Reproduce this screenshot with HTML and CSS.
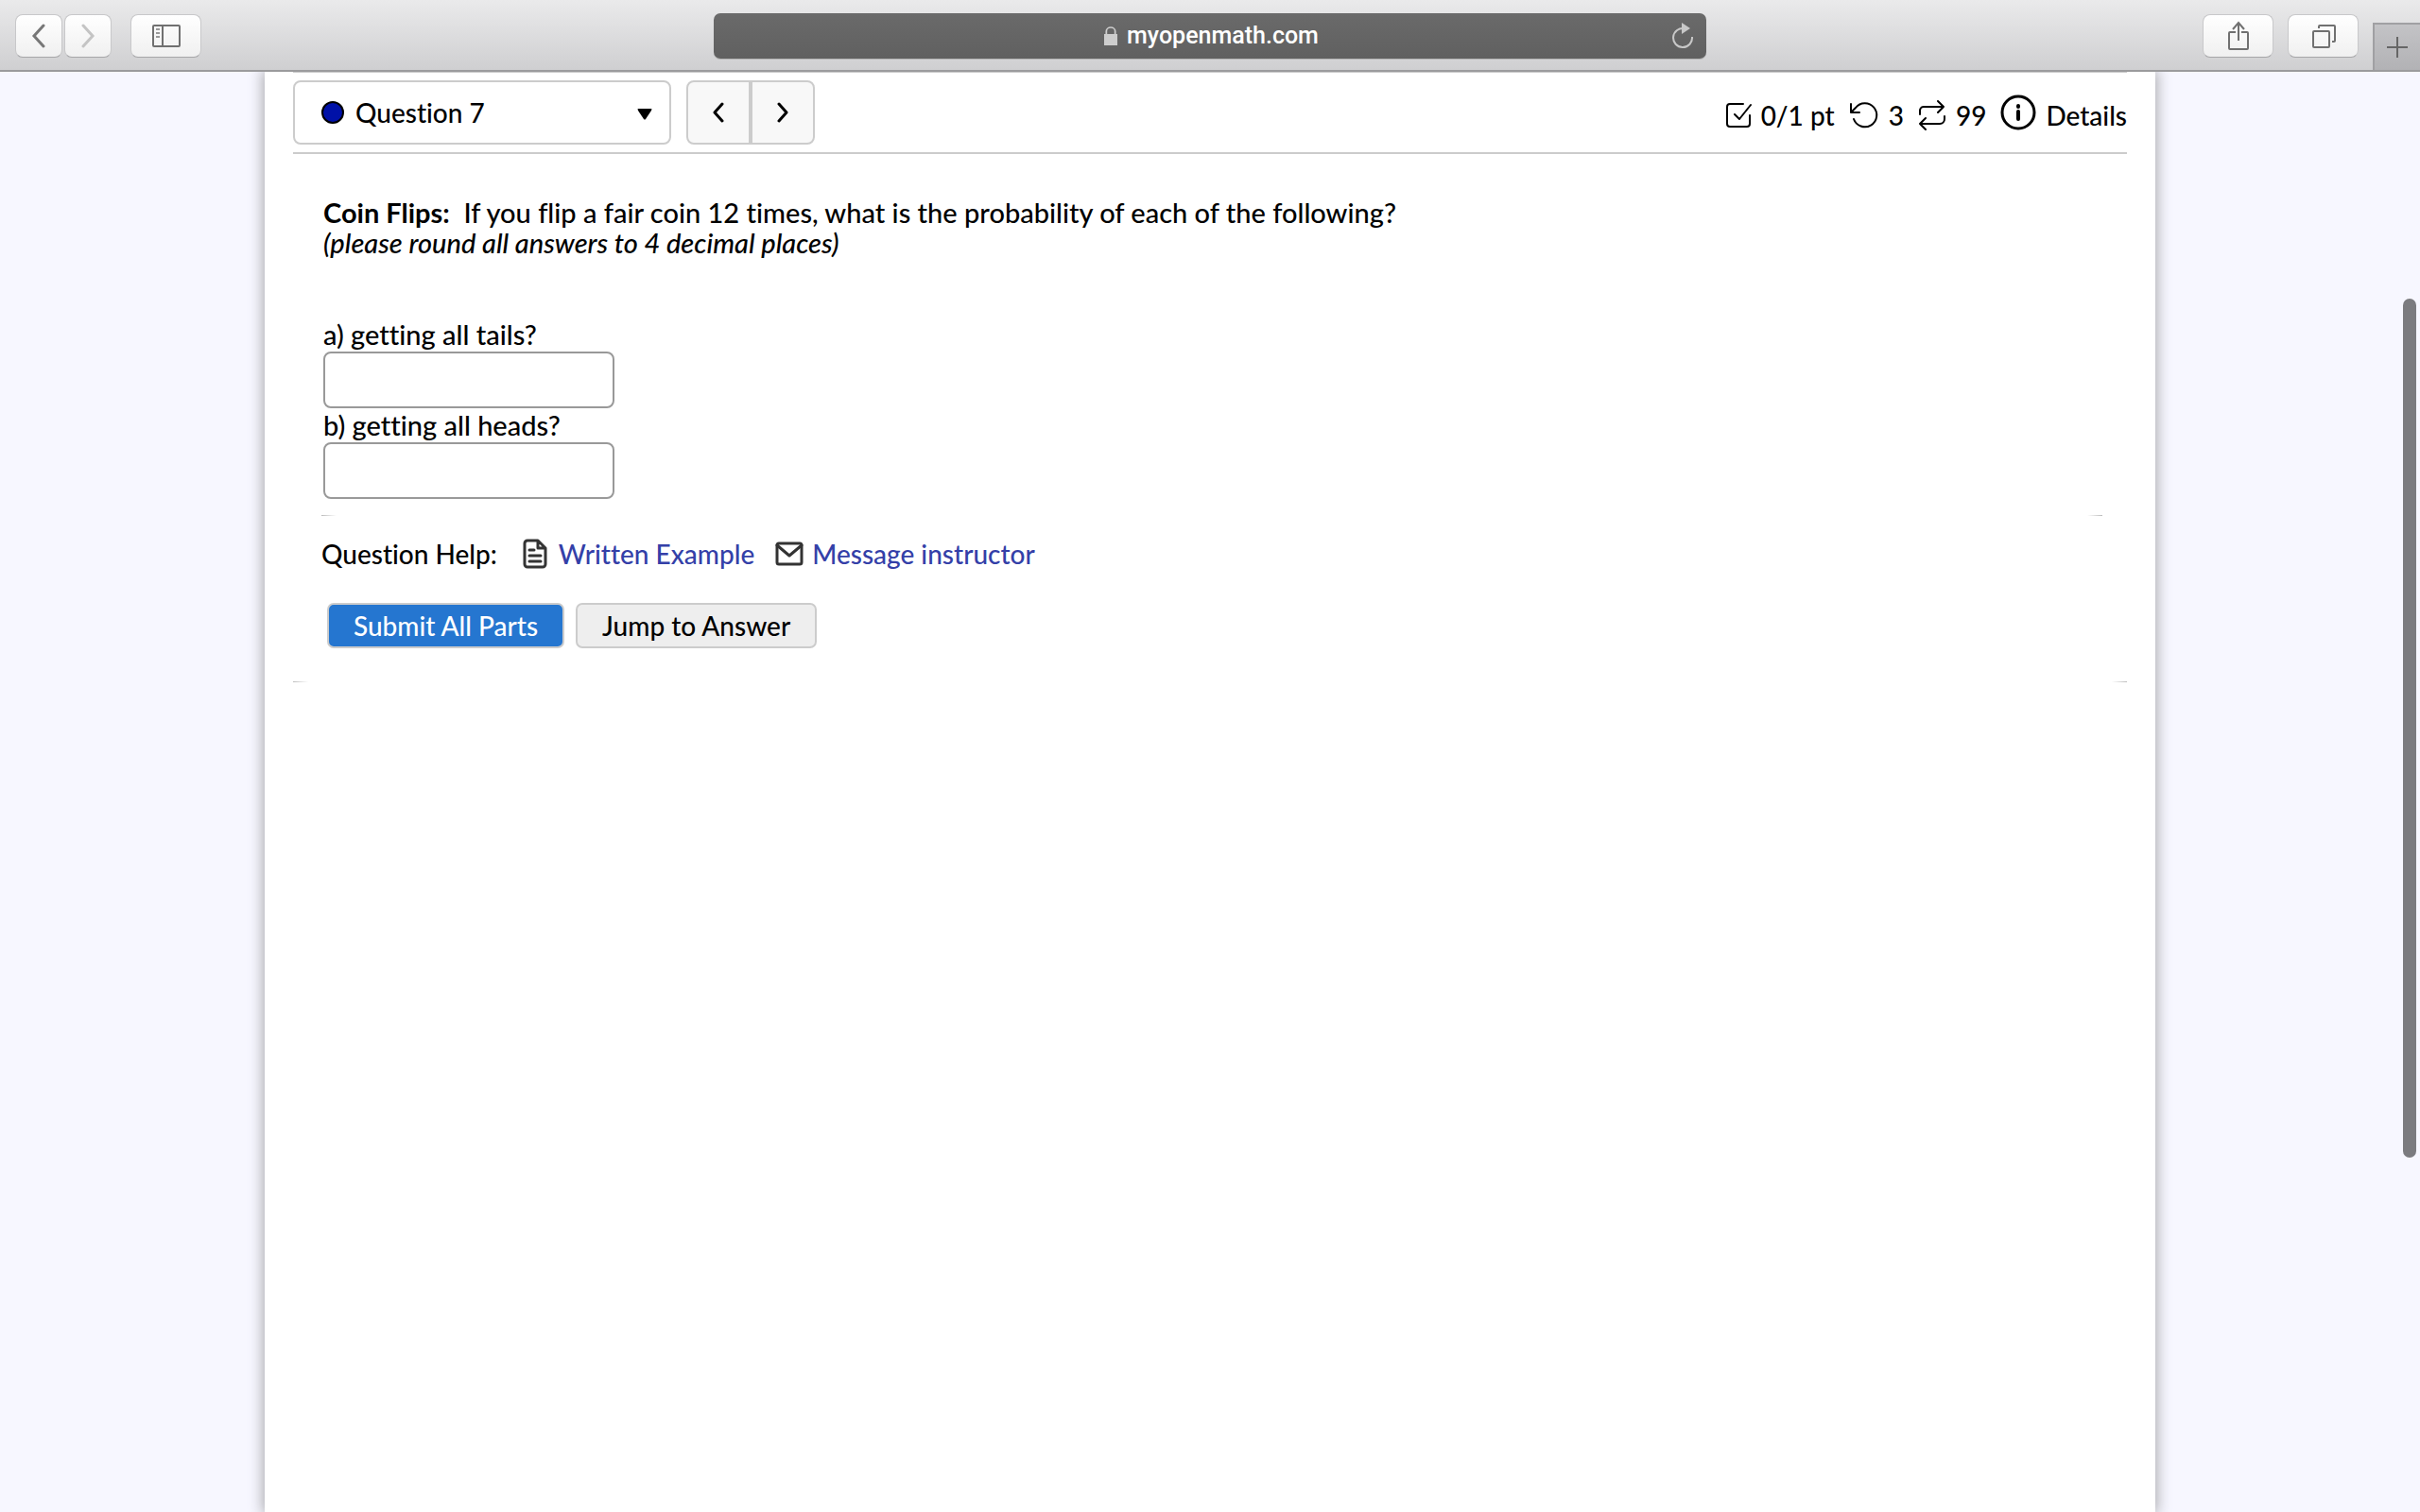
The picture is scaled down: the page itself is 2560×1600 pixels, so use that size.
FILE: index.html
```html
<!DOCTYPE html>
<html lang="en">
<head>
<meta charset="UTF-8">
<meta name="viewport" content="width=device-width, initial-scale=1.0">
<title>Question 7</title>
<link rel="stylesheet" href="styles.css">
</head>
<body>
  <header class="toolbar">
    <div class="toolbar-left">
      <div class="history">
        <button class="tool small" aria-label="Back">
          <svg width="16" height="26" viewBox="0 0 16 26" fill="none" stroke="#777" stroke-width="3" stroke-linecap="round"><path d="M13 2L3 13l10 11"/></svg>
        </button>
        <button class="tool small" aria-label="Forward">
          <svg width="16" height="26" viewBox="0 0 16 26" fill="none" stroke="#c4c4c4" stroke-width="3" stroke-linecap="round"><path d="M3 2l10 11L3 24"/></svg>
        </button>
      </div>
      <button class="tool" aria-label="Sidebar">
        <svg width="30" height="24" viewBox="0 0 30 24" fill="none" stroke="#707070" stroke-width="2"><rect x="1" y="1" width="28" height="22" rx="1"/><path d="M11 1v22"/><path d="M4 5h4M4 9h4M4 13h4" stroke="#999"/></svg>
      </button>
    </div>
    <div class="address">
      <a class="site" href="#">
        <svg width="14" height="20" viewBox="0 0 12 20" preserveAspectRatio="none"><path d="M0 8h12v12H0z" fill="#cdcdcd"/><path d="M2 9V5a4 4 0 0 1 8 0v4" fill="none" stroke="#cdcdcd" stroke-width="1.5"/></svg>
        <span>myopenmath.com</span>
      </a>
      <button class="reload" aria-label="Reload">
        <svg width="24" height="28" viewBox="0 0 24 28"><path d="M14 6.2A10 10 0 1 0 22 15" fill="none" stroke="#c8c8c8" stroke-width="2"/><path d="M11 0l9 6-9 6z" fill="#c8c8c8"/></svg>
      </button>
    </div>
    <div class="toolbar-right">
      <button class="tool" aria-label="Share">
        <svg width="24" height="32" viewBox="0 0 24 32" fill="none" stroke="#707070" stroke-width="2"><path d="M9 12H3a1 1 0 0 0-1 1v16a1 1 0 0 0 1 1h18a1 1 0 0 0 1-1V13a1 1 0 0 0-1-1h-6"/><path d="M12 21V3M6 9l6-7 6 7"/></svg>
      </button>
      <button class="tool" aria-label="Show tabs">
        <svg width="26" height="26" viewBox="0 0 26 26" fill="none" stroke="#707070" stroke-width="2"><rect x="2" y="8" width="17" height="17" rx="1"/><path d="M8 5V3a1 1 0 0 1 1-1h15a1 1 0 0 1 1 1v15a1 1 0 0 1-1 1h-2"/></svg>
      </button>
      <button class="new-tab" aria-label="New tab">
        <svg width="22" height="22" viewBox="0 0 22 22" stroke="#666" stroke-width="2"><path d="M11 0v22M0 11h22"/></svg>
      </button>
    </div>
  </header>

  <main class="page">
    <div class="question-bar">
      <div class="picker">
        <span class="dot"></span>
        <select aria-label="Question">
          <option>Question 7</option>
        </select>
        <svg width="16" height="16" viewBox="0 0 16 16"><path d="M1 4h14q1 0 0 2l-6 9q-1 1-2 0L1 6Q0 4 1 4z"/></svg>
      </div>
      <div class="pager">
        <button aria-label="Previous question"><svg width="12" height="22" viewBox="0 0 12 22"><path d="M10 2L2 11l8 9"/></svg></button>
        <button aria-label="Next question"><svg width="12" height="22" viewBox="0 0 12 22"><path d="M2 2l8 9-8 9"/></svg></button>
      </div>
      <div class="status">
        <span class="stat">
          <svg width="28" height="28" viewBox="0 0 28 28"><path d="M19 2H5a3 3 0 0 0-3 3v18a3 3 0 0 0 3 3h18a3 3 0 0 0 3-3v-9M10 13l5 5L27 3"/></svg>
          0/1 pt
        </span>
        <span class="stat">
          <svg width="32" height="30" viewBox="0 0 32 30"><path d="M2 3v9h9M2 12l5-5a12.5 12.5 0 1 1-2 12"/></svg>
          3
        </span>
        <span class="stat">
          <svg width="30" height="34" viewBox="0 0 30 34"><path d="M2 16v-4a4 4 0 0 1 4-4h21M21 2l6 6-6 6M28 18v3a5 5 0 0 1-5 5H2M8 20l-6 6 6 6"/></svg>
          99
        </span>
        <a class="stat details" href="#">
          <svg width="38" height="38" viewBox="0 0 38 38"><circle cx="19" cy="19" r="17"/><path d="M19 18v8M19 12v1" stroke-width="4"/></svg>
          Details
        </a>
      </div>
    </div>

    <form class="question">
      <p class="prompt"><b>Coin Flips:</b>&nbsp; If you flip a fair coin 12 times, what is the probability of each of the following?<br>
      <i>(please round all answers to 4 decimal places)</i></p>

      <div class="part">
        <label for="partA">a) getting all tails?</label>
        <input type="text" id="partA">
      </div>
      <div class="part">
        <label for="partB">b) getting all heads?</label>
        <input type="text" id="partB">
      </div>

      <div class="rule"></div>

      <div class="help">
        <span>Question Help:</span>
        <a class="example" href="#">
          <svg width="26" height="32" viewBox="0 0 26 32"><path d="M16 2H5a3 3 0 0 0-3 3v22a3 3 0 0 0 3 3h16a3 3 0 0 0 3-3V10zM16 2v8h8M7 12h5M7 18h12M7 24h12"/></svg>
          Written Example
        </a>
        <a class="message" href="#">
          <svg width="30" height="26" viewBox="0 0 30 26"><rect x="2" y="2" width="26" height="22" rx="2"/><path d="M2 4l13 11L28 4"/></svg>
          Message instructor
        </a>
      </div>

      <div class="actions">
        <button type="button" class="primary">Submit All Parts</button>
        <button type="button">Jump to Answer</button>
      </div>
    </form>
    <div class="rule"></div>
  </main>
  <div class="scrollbar"></div>
</body>
</html>
```
FILE: styles.css
```css
* { box-sizing: border-box; }
body { margin: 0; min-height: 100vh; display: flex; flex-direction: column; background: #f7f7ff; color: #000; font-family: "Trebuchet MS", Lato, sans-serif; font-size: 28px; font-weight: 500; line-height: 32px; font-variant-ligatures: none; }
button, input, select { font: inherit; color: inherit; }
button { padding: 0; display: flex; align-items: center; justify-content: center; }
svg { flex: none; }

/* browser toolbar */
.toolbar { position: relative; z-index: 1; height: 76px; display: grid; grid-template-columns: 1fr minmax(0, 1050px) 1fr; border-bottom: 2px solid #9b9b9d; background: linear-gradient(#eaeaeb, #cfcfd1); }
.toolbar-left { display: flex; gap: 20px; padding: 15px 16px; }
.history { display: flex; gap: 2px; }
.tool { width: 75px; height: 46px; border: 1px solid #c8c8ca; border-bottom: 1px solid #a6a6a8; border-radius: 8px; background: linear-gradient(#fff, #f0f0f0); }
.tool.small { width: 50px; }
.address { height: 48px; margin-top: 14px; padding: 0 13px 0 40px; display: flex; align-items: center; border-radius: 7px; background: linear-gradient(#6a6a6a, #606060); box-shadow: 0 1px 0 #b4b4b4; }
.site { flex: 1; display: flex; justify-content: center; align-items: center; gap: 10px; color: #fff; text-decoration: none; font-family: Roboto, sans-serif; font-size: 25px; font-weight: 500; }
.reload { border: 0; background: none; }
.toolbar-right { display: flex; justify-content: flex-end; gap: 15px; padding-top: 15px; }
.new-tab { width: 50px; height: 50px; margin-top: 9px; border: solid #a0a0a3; border-width: 2px 0 0 2px; background: linear-gradient(#c3c3c6, #b2b2b5); }

/* white page sheet */
.page { flex: 1; width: 100%; max-width: 2000px; margin: 0 auto; padding: 0 30px; background: #fff; box-shadow: 0 0 14px 2px #aaaaae; }
.question-bar { display: flex; align-items: center; height: 87px; border-top: 1px solid #ccc; border-bottom: 2px solid #ccc; }
.picker { width: 400px; height: 68px; padding: 0 18px 0 28px; display: flex; align-items: center; gap: 12px; border: 2px solid #ccc; border-radius: 8px; }
.dot { width: 24px; height: 24px; flex: none; border: 2px solid #000; border-radius: 50%; background: #0011a8; }
.picker select { flex: 1; appearance: none; padding: 0; border: 0; background: none; }
.pager { display: flex; height: 68px; margin-left: 16px; border: 2px solid #ccc; border-radius: 8px; background: #f8f8f8; }
.pager button { width: 64px; border: 0; background: none; }
.pager button + button { width: 68px; border-left: 4px solid #ccc; }
.pager svg, .status svg, .help svg { fill: none; stroke: #000; stroke-width: 3; stroke-linecap: round; stroke-linejoin: round; }
.status { margin-left: auto; padding-top: 6px; display: flex; align-items: center; gap: 15px; }
.stat { display: flex; align-items: center; gap: 10px; color: #000; text-decoration: none; }
.status svg { stroke-width: 2; }
.status .details svg { margin-bottom: 6px; stroke-width: 3; }

.question { padding: 46px 26px 0 30px; }
.prompt { margin: 0 2px 63px; font-size: 29px; }
.part { display: flex; flex-direction: column; align-items: flex-start; margin-left: 2px; }
.part label { font-size: 29px; line-height: 36px; }
.part input { width: 308px; height: 60px; padding: 0 12px; border: 2px solid #999; border-radius: 8px; background: #fff; }
.rule { height: 1px; background: linear-gradient(to right, #bbb, transparent 16px calc(100% - 16px), #bbb); }
.question .rule { margin-top: 17px; }
.help { display: flex; align-items: center; margin-top: 24px; }
.help a { display: flex; align-items: center; gap: 12px; color: #3440a8; text-decoration: none; }
.help svg { stroke: #333; }
.help .example { margin-left: 27px; }
.help .message { margin-left: 22px; gap: 9px; }
.actions { display: flex; gap: 12px; margin: 36px 6px 35px; }
.actions button { height: 48px; padding: 0 26px; border: 2px solid #ccc; border-radius: 7px; background: #eee; }
.actions .primary { background: #2576d0; color: #fff; }

.scrollbar { position: fixed; z-index: 2; top: 316px; right: 4px; bottom: 375px; width: 14px; border-radius: 7px; background: #7b7b7f; }
```
